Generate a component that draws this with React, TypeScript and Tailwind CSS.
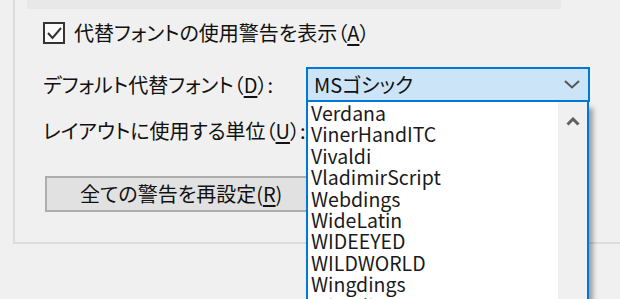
import React from "react";

const items = [
  "Verdana",
  "VinerHandITC",
  "Vivaldi",
  "VladimirScript",
  "Webdings",
  "WideLatin",
  "WIDEEYED",
  "WILDWORLD",
  "Wingdings",
  "Wingdings 2",
];

function U({ children }: { children: React.ReactNode }) {
  return <span className="underline underline-offset-[3px] decoration-[1.5px]">{children}</span>;
}

export default function App() {
  return (
    <div className="w-[620px] h-[299px] bg-[#f0f0f0] overflow-hidden relative font-['Noto_Sans_CJK_JP',sans-serif] text-[#111] text-[20px] [font-feature-settings:'palt']">
      <div className="ml-[13px] w-[640px] h-[244px] border-l-2 border-b-2 border-[#dcdcdc] flex flex-col">
        <div className="ml-[12px] w-[534px] h-[9px] bg-[#e8e8e8] shrink-0" />
        {/* checkbox row */}
        <div className="mt-[13px] ml-[28px] flex items-center h-[22px] gap-[9px]">
          <div className="w-[22px] h-[22px] border-2 border-[#333] bg-[#fafafa] flex items-center justify-center">
            <svg width="18" height="18" viewBox="0 0 18 18">
              <polyline points="3,9 7.5,14 16,4" fill="none" stroke="#333" strokeWidth="2" />
            </svg>
          </div>
          <span className="leading-none">
            代替フォントの使用警告を表示（<U>A</U>）
          </span>
        </div>
        {/* default font row */}
        <div className="mt-[23px] ml-[28px] flex items-center h-[35px]">
          <span className="w-[263px] leading-none">
            デフォルト代替フォント（<U>D</U>）:
          </span>
          <div className="relative w-[284px] h-[35px]">
            <div className="w-full h-full border-2 border-[#0078d7] bg-[#cce4f7] flex items-center pl-[6px] pr-[8px] justify-between">
              <span className="text-[20px] leading-none">MSゴシック</span>
              <svg width="16" height="9" viewBox="0 0 16 9">
                <polyline points="1,1 8,7.5 15,1" fill="none" stroke="#555" strokeWidth="2" />
              </svg>
            </div>
            <div className="absolute left-0 top-[35px] w-[283px] h-[230px] bg-white border-2 border-t-0 border-[#0078d7] flex shadow-[4px_6px_5px_rgba(0,0,0,0.35)] z-10">
              <div className="flex-1 flex flex-col pl-[3px] text-[19.5px] text-[#1a1a1a] [font-feature-settings:normal]">
                {items.map((it) => (
                  <div key={it} className="h-[21.4px] leading-[21.4px] whitespace-nowrap">
                    {it}
                  </div>
                ))}
              </div>
              <div className="w-[29px] bg-[#f0f0f0] flex flex-col items-center pt-[15px]">
                <svg width="14" height="9" viewBox="0 0 14 9">
                  <polyline points="1.5,7.5 7,2 12.5,7.5" fill="none" stroke="#606060" strokeWidth="3" />
                </svg>
              </div>
            </div>
          </div>
        </div>
        {/* unit row */}
        <div className="mt-[11px] ml-[28px] flex items-center h-[35px]">
          <span className="leading-none">
            レイアウトに使用する単位（<U>U</U>）:
          </span>
        </div>
        {/* button */}
        <div className="mt-[28px] ml-[30px]">
          <div className="w-[300px] h-[36px] bg-[#e1e1e1] border-2 border-[#adadad] flex items-center pl-[33px]">
            <span className="leading-none">
              全ての警告を再設定(<U>R</U>)
            </span>
          </div>
        </div>
      </div>
    </div>
  );
}
